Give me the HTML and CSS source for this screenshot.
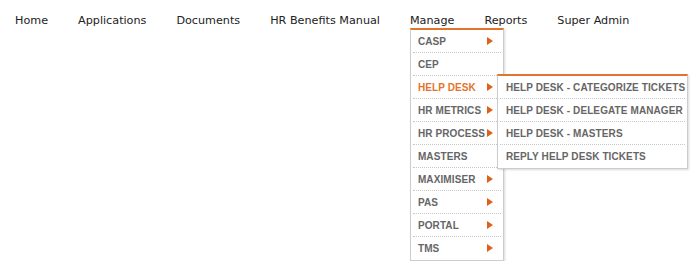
FILE: index.html
```html
<!DOCTYPE html>
<html lang="en">
<head>
    <meta charset="UTF-8">
    <title>Menu</title>
    <link rel="stylesheet" href="styles.css">
</head>
<body>
    <div class="nav">
        <div class="nav-item">Home</div>
        <div class="nav-item">Applications</div>
        <div class="nav-item">Documents</div>
        <div class="nav-item">HR Benefits Manual</div>
        <div class="nav-item open">
            <span class="nav-label">Manage</span>
            <div class="dropdown">
                <div class="menu-item has-sub"><span class="label">CASP</span></div>
                <div class="menu-item"><span class="label">CEP</span></div>
                <div class="menu-item has-sub active">
                    <span class="label">HELP DESK</span>
                    <div class="submenu">
                        <div class="menu-item">HELP DESK - CATEGORIZE TICKETS</div>
                        <div class="menu-item">HELP DESK - DELEGATE MANAGER</div>
                        <div class="menu-item">HELP DESK - MASTERS</div>
                        <div class="menu-item">REPLY HELP DESK TICKETS</div>
                    </div>
                </div>
                <div class="menu-item has-sub"><span class="label">HR METRICS</span></div>
                <div class="menu-item has-sub"><span class="label">HR PROCESS</span></div>
                <div class="menu-item"><span class="label">MASTERS</span></div>
                <div class="menu-item has-sub"><span class="label">MAXIMISER</span></div>
                <div class="menu-item has-sub"><span class="label">PAS</span></div>
                <div class="menu-item has-sub"><span class="label">PORTAL</span></div>
                <div class="menu-item has-sub"><span class="label">TMS</span></div>
            </div>
        </div>
        <div class="nav-item">Reports</div>
        <div class="nav-item">Super Admin</div>
    </div>
</body>
</html>
```

FILE: styles.css
```css
body {
    margin: 0;
    font-family: "DejaVu Sans", Verdana, sans-serif;
    background: #fff;
}
.nav {
    display: flex;
    align-items: flex-start;
    padding-top: 13px;
}
.nav-item {
    padding: 0 15px;
    line-height: 15px;
    font-size: 11.2px;
    color: #222;
    white-space: nowrap;
}
.nav-item.open {
    display: flex;
    flex-direction: column;
    align-items: flex-start;
}
.dropdown {
    flex-shrink: 0;
    width: 92px;
    margin-right: -80px; /* let the menu hang past the tab without widening it */
    background: #fff;
    border: 1px solid #ccc;
    border-top: 2px solid #e2742c;
    box-shadow: 1px 1px 2px rgba(0, 0, 0, 0.15);
}
.menu-item {
    display: flex;
    align-items: flex-start;
    margin: 0 2px;
    padding-left: 5px;
    height: 22px;
    line-height: 23px;
    border-bottom: 1px dotted #c8c8c8;
    font-family: "Liberation Sans", Arial, sans-serif;
    font-size: 10px;
    font-weight: bold;
    color: #666;
    letter-spacing: 0.1px;
}
.menu-item:last-child {
    border-bottom: none;
    height: 23px;
}
.menu-item.active {
    color: #e2742c;
}
.label {
    flex-shrink: 0;
    width: 69px;
}
.has-sub::after {
    content: "";
    order: 1;
    flex-shrink: 0;
    margin: 7px 8px 0 0;
    border-left: 6px solid #e0601a;
    border-top: 4px solid transparent;
    border-bottom: 4px solid transparent;
}
.submenu {
    order: 2;
    position: relative;
    z-index: 2;
    flex-shrink: 0;
    width: 189px;
    margin: -2px 0 0 -4px;
    background: #fff;
    border: 1px solid #ccc;
    border-top: 2px solid #e2742c;
    box-shadow: 1px 1px 2px rgba(0, 0, 0, 0.15);
}
.submenu .menu-item {
    padding-left: 6px;
    color: #666;
}
```
